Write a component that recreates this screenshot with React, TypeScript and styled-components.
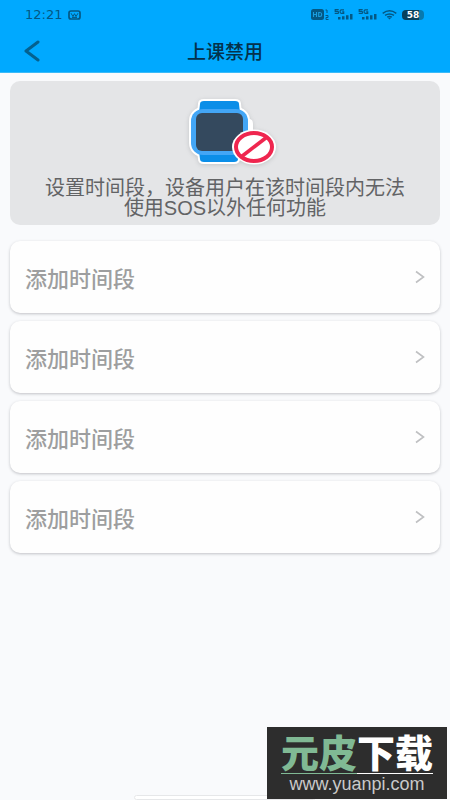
import React from "react";
import styled, { createGlobalStyle } from "styled-components";

const GlobalStyle = createGlobalStyle`
  *, *::before, *::after { box-sizing: border-box; }
  body {
    margin: 0;
    background: #f9fafc;
    font-family: "Liberation Sans", "Noto Sans CJK SC", sans-serif;
  }
`;

const Screen = styled.div`
  min-height: 100vh;
  display: flex;
  flex-direction: column;
`;

const Header = styled.header`
  background: #00a9ff;
  border-bottom: 1px solid #3abaf8;
`;

const StatusBar = styled.div`
  height: 29px;
  padding: 0 26px 0 25px;
  display: flex;
  align-items: center;
  justify-content: space-between;
  color: #045884;
`;

const StatusGroup = styled.div<{ $gap: number }>`
  display: flex;
  align-items: center;
  gap: ${(p) => p.$gap}px;
`;

const Clock = styled.time`
  font: 500 13px/20px "DejaVu Sans", sans-serif;
`;

const Battery = styled.span`
  width: 22px;
  height: 10px;
  border-radius: 4px;
  display: flex;
  align-items: center;
  justify-content: center;
  background: linear-gradient(90deg, #07405c 76%, #0879ad 76%);
  color: #ffffff;
  font: bold 9px/10px "DejaVu Sans", sans-serif;
`;

const NavBar = styled.nav`
  height: 43px;
  padding: 0 16px;
  display: grid;
  grid-template-columns: 32px 1fr 32px;
  align-items: center;
`;

const BackButton = styled.button`
  height: 40px;
  padding: 0;
  border: 0;
  background: none;
  display: flex;
  align-items: center;
  justify-content: center;
  cursor: pointer;
`;

const Title = styled.h1`
  margin: 0;
  text-align: center;
  color: #04314b;
  font: 500 19px/26px "Noto Sans CJK SC", sans-serif;
`;

const Main = styled.main`
  padding: 8px 10px;
  display: flex;
  flex-direction: column;
  gap: 16px;
`;

const Notice = styled.section`
  min-height: 144px;
  padding: 16px 32px 7px;
  border-radius: 10px;
  background: #e4e5e7;
  display: flex;
  flex-direction: column;
  align-items: center;
  gap: 11px;
`;

const NoticeText = styled.p`
  margin: 0;
  color: #626365;
  text-align: center;
  text-wrap: nowrap;
  font: 20px/20px "Liberation Sans", "Noto Sans CJK SC", sans-serif;
`;

const PeriodList = styled.ul`
  margin: 0;
  padding: 0;
  list-style: none;
  display: flex;
  flex-direction: column;
  gap: 8px;
`;

const PeriodButton = styled.button`
  width: 100%;
  height: 72px;
  padding: 0 15px;
  border: 0;
  border-radius: 10px;
  background: #fefefe;
  box-shadow: 0 1px 3px rgba(30, 35, 45, 0.26);
  display: flex;
  align-items: center;
  justify-content: space-between;
  color: #9d9e9f;
  font: 500 22px/32px "Noto Sans CJK SC", sans-serif;
  cursor: pointer;
`;

const HomeIndicator = styled.div`
  position: fixed;
  left: 50%;
  bottom: 0;
  width: 182px;
  height: 5px;
  margin-left: -91px;
  border: 1px solid #e6e7e9;
  border-radius: 3px;
  background: #ffffff;
`;

const Watermark = styled.aside`
  position: fixed;
  right: 3px;
  bottom: 1px;
  width: 180px;
  height: 72px;
  padding: 7px 12px 0;
  background: #2d2d2d;
  display: flex;
  flex-direction: column;
  align-items: center;
`;

const Brand = styled.strong`
  height: 39px;
  color: #ffffff;
  white-space: nowrap;
  font: 900 38px/40px "Liberation Sans", "Noto Sans CJK SC", sans-serif;
`;

const BrandAccent = styled.span`
  color: #80b994;
`;

const BrandRule = styled.div`
  width: 152px;
  height: 1px;
  flex-shrink: 0;
  background: linear-gradient(90deg, #80b994 50%, #ffffff 50%);
`;

const SiteAddress = styled.span`
  color: #c9c9c9;
  font: 18px/20px "Liberation Sans", sans-serif;
`;

const AppBadge = () => (
  <svg width="13" height="10" viewBox="0 0 13 10" fill="none" stroke="#045884">
    <rect x="1" y="1" width="11" height="8" rx="2" strokeWidth="1.7" />
    <path d="M3 3.2l2 3.3 1.5-2.8L8 6.5l2-3.3M4 7.4h5" />
  </svg>
);

const HdIcon = () => (
  <svg width="18" height="11" viewBox="0 0 18 11" fill="none">
    <rect y="0" width="13" height="11" rx="2.5" fill="#045884" />
    <path d="M2.5 3v5M5.5 3v5M2.5 5.5h3M7.7 3.5v4h1.2q1.8 0 1.8-2t-1.8-2z" stroke="#1a9edf" strokeWidth="1.1" />
    <path d="M14.5 1H16v3M14.5 6.5H17v2h-2v2h2.5" stroke="#045884" />
  </svg>
);

const SignalIcon = () => (
  <svg width="19" height="11" viewBox="0 0 19 11" fill="none">
    <path
      d="M4.7.6H1.2v1.8h2.4q1 0 1 1t-1 1H.7M10 .8H7.3q-1.2 0-1.2 1.8t1.2 1.8H9.7V2.8H8.2"
      stroke="#045884"
      strokeWidth="1.2"
    />
    <path d="M4 8h2.5v2.5H4zM8 7.3h2.5v3.2H8zM12 6.3h2.5v4.2H12zM16 5h2.5v5.5H16z" fill="#045884" />
  </svg>
);

const WifiIcon = () => (
  <svg width="15" height="10" viewBox="0 0 15 10" fill="none" stroke="#045884" strokeWidth="1.5">
    <path d="M.7 3.3Q7.5-1.6 14.3 3.3M3 5.4Q7.5 2.4 12 5.4M5.2 7.2Q7.5 5.8 9.8 7.2" />
    <path d="M5.8 7.8h3.4L7.5 9.6z" fill="#045884" stroke="none" />
  </svg>
);

const BackIcon = () => (
  <svg width="16" height="22" viewBox="0 0 16 22" fill="none" stroke="#04618f" strokeWidth="3">
    <path d="M14 2L2 11l12 9" strokeLinecap="round" strokeLinejoin="round" />
  </svg>
);

const ForwardIcon = () => (
  <svg width="10" height="14" viewBox="0 0 10 14" fill="none" stroke="#bfc0c2" strokeWidth="1.6">
    <path d="M1 1.5L8.5 7 1 12.5" />
  </svg>
);

const WatchBlockedIcon = () => (
  <svg width="90" height="70" viewBox="0 0 90 70">
    <g stroke="#ffffff" strokeWidth="4" strokeLinejoin="round">
      <path d="M24 4h31q4 0 4 3l1 9H19l1-9q0-3 4-3z" fill="#0b8ee8" />
      <path d="M19 54h40l-1 8q0 3-4 3H24q-4 0-4-3z" fill="#0b8ee8" />
      <path d="M67 24h2q2 0 2 3v6h-4z" fill="#1792ea" />
      <rect x="11" y="12" width="57" height="46" rx="12" fill="#43a6f6" />
    </g>
    <path d="M24 4h31q4 0 4 3l1 9H19l1-9q0-3 4-3zM19 54h40l-1 8q0 3-4 3H24q-4 0-4-3z" fill="#0b8ee8" />
    <rect x="11" y="12" width="57" height="46" rx="12" fill="#43a6f6" />
    <rect x="16" y="16" width="47" height="38" rx="6" fill="#34495e" />
    <ellipse cx="74" cy="50" rx="22" ry="17.5" fill="#ffffff" />
    <ellipse cx="74" cy="50" rx="18" ry="14" fill="#ffffff" stroke="#ef264f" strokeWidth="4" />
    <path d="M61 60l26-20" stroke="#ef264f" strokeWidth="3.6" />
  </svg>
);

const WatchArt = styled.div`
  height: 70px;
  svg {
    display: block;
    overflow: visible;
    filter: drop-shadow(0 1px 2px rgba(80, 85, 90, 0.22));
  }
`;

const periods = [1, 2, 3, 4];

export default function App() {
  return (
    <Screen>
      <GlobalStyle />
      <Header>
        <StatusBar>
          <StatusGroup $gap={6}>
            <Clock>12:21</Clock>
            <AppBadge />
          </StatusGroup>
          <StatusGroup $gap={5}>
            <HdIcon />
            <SignalIcon />
            <SignalIcon />
            <WifiIcon />
            <Battery>58</Battery>
          </StatusGroup>
        </StatusBar>
        <NavBar>
          <BackButton type="button" aria-label="返回">
            <BackIcon />
          </BackButton>
          <Title>上课禁用</Title>
        </NavBar>
      </Header>
      <Main>
        <Notice>
          <WatchArt>
            <WatchBlockedIcon />
          </WatchArt>
          <NoticeText>
            设置时间段，设备用户在该时间段内无法
            <br />
            使用SOS以外任何功能
          </NoticeText>
        </Notice>
        <PeriodList>
          {periods.map((id) => (
            <li key={id}>
              <PeriodButton type="button">
                <span>添加时间段</span>
                <ForwardIcon />
              </PeriodButton>
            </li>
          ))}
        </PeriodList>
      </Main>
      <HomeIndicator />
      <Watermark>
        <Brand>
          <BrandAccent>元皮</BrandAccent>下载
        </Brand>
        <BrandRule />
        <SiteAddress>www.yuanpi.com</SiteAddress>
      </Watermark>
    </Screen>
  );
}
